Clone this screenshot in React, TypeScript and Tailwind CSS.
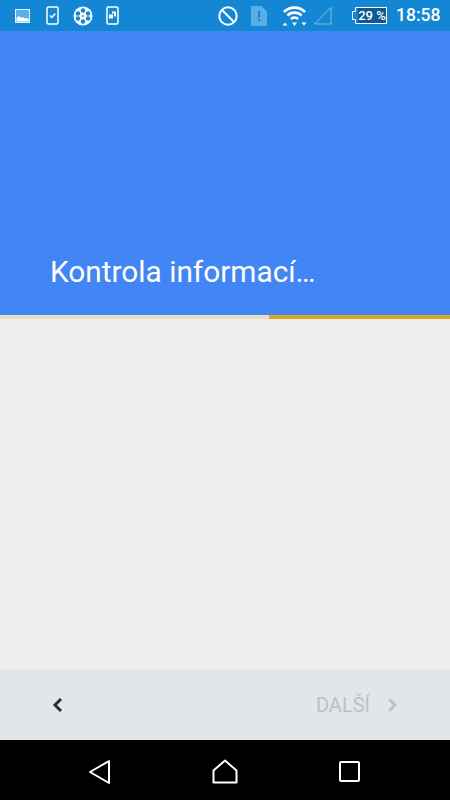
export default function App() {
  return (
    <div className="flex h-[800px] w-[450px] flex-col overflow-hidden bg-[#eeeeee] font-['Roboto',sans-serif]">
      {/* Status bar */}
      <div className="flex h-[31px] shrink-0 items-center bg-[#1487d4] pl-[15px] text-white">
        <div className="flex items-center">
          <svg width="15" height="14" viewBox="0 0 15 14" className="mr-[16px]">
            <rect x="0.500" y="0.500" width="14" height="13" fill="none" stroke="#dff0fb" strokeWidth="1" />
            <rect x="1" y="1" width="13" height="12" fill="#5aaee6" />
            <path d="M1.500 12.500V9l2.500-2 2 2 2-1 2 1.500 2-.5 1.500 .5v3z" fill="#fff" />
          </svg>
          <svg width="13" height="19" viewBox="0 0 13 19" className="mr-[14px]">
            <rect x="1" y="1" width="11" height="17" rx="1.500" fill="none" stroke="#fff" strokeWidth="1.500" />
            <path d="M3.800 9.500l2 2 3.500-4" fill="none" stroke="#fff" strokeWidth="1.500" />
          </svg>
          <svg width="20" height="20" viewBox="0 0 21 21" className="mr-[13px]">
            <circle cx="10.500" cy="10.500" r="10" fill="#fff" />
            <circle cx="10.500" cy="4.800" r="2.400" fill="#1487d4" />
            <circle cx="10.500" cy="16.200" r="2.400" fill="#1487d4" />
            <circle cx="5.200" cy="7.800" r="2.400" fill="#1487d4" />
            <circle cx="15.800" cy="7.800" r="2.400" fill="#1487d4" />
            <circle cx="5.200" cy="13.200" r="2.400" fill="#1487d4" />
            <circle cx="15.800" cy="13.200" r="2.400" fill="#1487d4" />
            <circle cx="10.500" cy="10.500" r="1" fill="#1487d4" />
          </svg>
          <svg width="13" height="19" viewBox="0 0 13 19">
            <rect x="1" y="1" width="11" height="17" rx="1.500" fill="none" stroke="#fff" strokeWidth="1.500" />
            <path d="M6 5.500h4v5H8V7.500H6z M3 8.500h4v4H3z" fill="#fff" />
          </svg>
        </div>
        <div className="ml-[99px] flex items-center">
          <svg width="20" height="20" viewBox="0 0 20 20" className="mr-[13px]">
            <circle cx="10" cy="10" r="8.700" fill="none" stroke="#fff" strokeWidth="2" />
            <path d="M4 4l12 12" stroke="#fff" strokeWidth="2" />
          </svg>
          <svg width="16" height="20" viewBox="0 0 16 20" className="mr-[15px]">
            <path d="M1 0h9.500L16 5.500V19a1 1 0 0 1-1 1H1a1 1 0 0 1-1-1V1a1 1 0 0 1 1-1z" fill="#5aaee6" />
            <rect x="7" y="5" width="2.200" height="6.500" fill="#1487d4" />
            <rect x="7" y="13" width="2.200" height="2.200" fill="#1487d4" />
          </svg>
          <svg width="25" height="21" viewBox="0 0 25 21" className="mr-[6px]">
            <path d="M1 6a16.500 16.500 0 0 1 23 0l-1.800 2a14 14 0 0 0-19.400 0z" fill="#fff" />
            <path d="M4.500 9.500a11.500 11.500 0 0 1 16 0l-1.800 2a9 9 0 0 0-12.400 0z" fill="#fff" />
            <path d="M8 13a6.500 6.500 0 0 1 9 0l-1.800 2a4 4 0 0 0-5.400 0z" fill="#fff" />
            <path d="M12.500 21l-2.500-3.500h5z M3 17.500l2.500 3h-5z M22 20.500l-2.500-3h5z" fill="#fff" />
          </svg>
          <svg width="19" height="19" viewBox="0 0 19 19">
            <path d="M18 1.500V18H1.500z" fill="none" stroke="#fff" strokeOpacity="0.45" strokeWidth="1" />
          </svg>
        </div>
        <div className="ml-[20px] flex items-center">
          <svg width="6" height="17" viewBox="0 0 6 17">
            <path d="M6 .5H3.500V4.500H.5V12.500H3.500V16.500H6" fill="none" stroke="#fff" strokeWidth="1" />
          </svg>
          <div className="flex h-[17px] w-[29px] items-center justify-center border border-l-0 border-white bg-[#0e5a8f] text-[13px] leading-none font-medium whitespace-nowrap text-white">
            29 %
          </div>
        </div>
        <span className="ml-[9px] text-[17.500px] leading-none font-medium">18:58</span>
      </div>

      {/* Header */}
      <div className="flex h-[284px] shrink-0 items-end bg-[#4285f4] pb-[26px] pl-[50px]">
        <h1 className="text-[29.800px] leading-[34px] font-normal text-white">Kontrola informací…</h1>
      </div>
      <div className="flex h-[4px] shrink-0">
        <div className="w-[269px] bg-[#e8dcc6]" />
        <div className="flex-1 bg-[#dba81c]" />
      </div>

      {/* Content */}
      <div className="flex-1" />

      {/* Footer */}
      <div className="flex h-[70px] shrink-0 items-center justify-between bg-[#e3e6e9] pr-[50px] pl-[50px]">
        <svg width="14" height="18" viewBox="0 0 14 18">
          <path d="M11 3L5 9l6 6" fill="none" stroke="#263238" strokeWidth="3" />
        </svg>
        <div className="flex items-center gap-[16px]">
          <span className="text-[20px] leading-none text-[#bdc1c6]">DALŠÍ</span>
          <svg width="14" height="18" viewBox="0 0 14 18">
            <path d="M3 3l6 6-6 6" fill="none" stroke="#bdc1c6" strokeWidth="3" />
          </svg>
        </div>
      </div>

      {/* Nav bar */}
      <div className="flex h-[60px] shrink-0 items-center bg-black pt-[3px] pl-[88px]">
        <svg width="23" height="26" viewBox="0 0 23 26" className="mr-[101px]">
          <path d="M21 2v22L2 13z" fill="none" stroke="#fff" strokeWidth="2" strokeLinejoin="round" />
        </svg>
        <svg width="26" height="25" viewBox="0 0 26 25" className="mr-[101px]">
          <path d="M1.500 23.500V11.500L13 1.500l11.500 10v12z" fill="none" stroke="#fff" strokeWidth="2" strokeLinejoin="round" />
        </svg>
        <svg width="21" height="21" viewBox="0 0 21 21">
          <rect x="1" y="1" width="19" height="19" rx="1" fill="none" stroke="#fff" strokeWidth="2" />
        </svg>
      </div>
    </div>
  )
}
